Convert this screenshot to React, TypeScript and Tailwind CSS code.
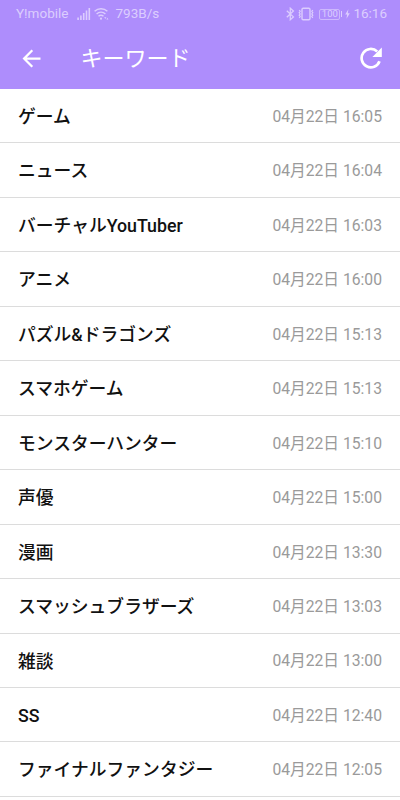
const keywords = [
  { name: 'ゲーム', date: '04月22日 16:05' },
  { name: 'ニュース', date: '04月22日 16:04' },
  { name: 'バーチャルYouTuber', date: '04月22日 16:03' },
  { name: 'アニメ', date: '04月22日 16:00' },
  { name: 'パズル&ドラゴンズ', date: '04月22日 15:13' },
  { name: 'スマホゲーム', date: '04月22日 15:13' },
  { name: 'モンスターハンター', date: '04月22日 15:10' },
  { name: '声優', date: '04月22日 15:00' },
  { name: '漫画', date: '04月22日 13:30' },
  { name: 'スマッシュブラザーズ', date: '04月22日 13:03' },
  { name: '雑談', date: '04月22日 13:00' },
  { name: 'SS', date: '04月22日 12:40' },
  { name: 'ファイナルファンタジー', date: '04月22日 12:05' },
]

function SignalIcon() {
  return (
    <svg width="14" height="14" viewBox="0 0 14 14" fill="currentColor">
      <rect x="0.3" y="10.5" width="1.6" height="2.5" />
      <rect x="3.1" y="8.5" width="1.6" height="4.5" />
      <rect x="5.9" y="6" width="1.6" height="7" />
      <rect x="8.7" y="3.5" width="1.6" height="9.5" />
      <rect x="11.5" y="1" width="1.6" height="12" />
    </svg>
  )
}

function WifiIcon() {
  return (
    <svg width="15" height="14" viewBox="0 0 15 14" fill="none" stroke="currentColor" strokeWidth="1.4">
      <path d="M0.6 4.3a9.2 9.2 0 0 1 12.8 0" />
      <path d="M2.6 6.9a6.4 6.4 0 0 1 8.8 0" />
      <path d="M4.5 9.3a3.7 3.7 0 0 1 5 0" />
      <circle cx="7" cy="11.7" r="1.1" fill="currentColor" stroke="none" />
      <path d="M10.2 10.2l1.1 1.8 1.1-1.8zM12.4 12.6l1-1.8 1 1.8z" fill="currentColor" stroke="none" />
    </svg>
  )
}

function BluetoothIcon() {
  return (
    <svg width="9" height="14" viewBox="0 0 9 14" fill="none" stroke="currentColor" strokeWidth="1.3">
      <path d="M0.8 3.7l6.6 6.2-3.1 2.8V1.2l3.1 2.8-6.6 6.2" />
    </svg>
  )
}

function VibrateIcon() {
  return (
    <svg width="16" height="14" viewBox="0 0 16 14" fill="none" stroke="currentColor">
      <rect x="4" y="1.3" width="8" height="11.4" rx="1.2" strokeWidth="1.4" />
      <path d="M1.2 3l1 1.3-1 1.3 1 1.3-1 1.3 1 1.3-1 1.3M14.8 3l-1 1.3 1 1.3-1 1.3 1 1.3-1 1.3 1 1.3" strokeWidth="1.2" />
    </svg>
  )
}

function BatteryIcon() {
  return (
    <span className="flex items-center">
      <span className="flex h-[11px] w-[21px] items-center justify-center rounded-[2px] border border-[#cdb8fd] text-[9.5px] leading-none">
        100
      </span>
      <span className="ml-px h-[6px] w-px bg-current" />
    </span>
  )
}

function BoltIcon() {
  return (
    <svg width="5" height="10" viewBox="0 0 5 10" fill="currentColor">
      <path d="M3.4 0.3L0.2 5.6h1.9L1.5 9.7l3.3-5.4H2.8z" />
    </svg>
  )
}

function BackIcon() {
  return (
    <svg width="27" height="27" viewBox="0 0 24 24" fill="currentColor">
      <path d="M20 11H7.83l5.59-5.59L12 4l-8 8 8 8 1.41-1.41L7.83 13H20v-2z" />
    </svg>
  )
}

function RefreshIcon() {
  return (
    <svg width="22" height="22" viewBox="0 0 22 22">
      <path d="M19.5 14.2A9.2 9.2 0 1 1 17.2 4.5" fill="none" stroke="currentColor" strokeWidth="2.7" />
      <path d="M21.8 0.6v9.4h-9.4z" fill="currentColor" />
    </svg>
  )
}

export default function App() {
  return (
    <div className="h-[800px] w-[400px] overflow-hidden bg-white font-['Roboto','Noto_Sans_CJK_JP',sans-serif]">
      <header className="h-[89px] bg-[#ae8dfc] text-white">
        <div className="flex h-7 items-center pr-[13px] pl-4 text-[13.5px] leading-none text-[#dccdfe]">
          <span className="w-[60.5px]">Y!mobile</span>
          <SignalIcon />
          <span className="ml-[3px]"><WifiIcon /></span>
          <span className="ml-[7px]">793B/s</span>
          <div className="ml-auto flex items-center">
            <BluetoothIcon />
            <span className="ml-[3px]"><VibrateIcon /></span>
            <span className="ml-[5px]"><BatteryIcon /></span>
            <span className="ml-[3px]"><BoltIcon /></span>
            <span className="ml-[3px]">16:16</span>
          </div>
        </div>
        <div className="flex h-[60px] items-center pr-[18px] pl-[18px]">
          <BackIcon />
          <h1 className="ml-[35.5px] pt-px text-[22px] leading-none">キーワード</h1>
          <button className="ml-auto"><RefreshIcon /></button>
        </div>
      </header>

      <ul>
        {keywords.map(({ name, date }) => (
          <li
            key={name}
            className="flex h-[54.46px] items-center justify-between border-b border-[#dcdcdc] px-[18px] pt-[2px]"
          >
            <span className="pt-[0.3px] text-[17.8px] leading-none font-medium text-[#111]">{name}</span>
            <span className="text-[15.7px] leading-none text-[#9a9a9a]">{date}</span>
          </li>
        ))}
      </ul>
    </div>
  )
}
